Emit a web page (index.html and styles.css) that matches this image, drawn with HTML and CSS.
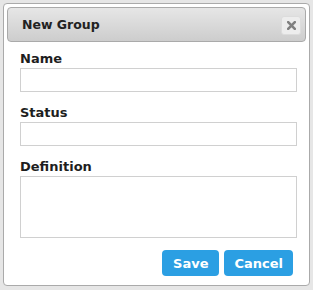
FILE: index.html
```html
<!DOCTYPE html>
<html>
<head>
<meta charset="utf-8">
<link rel="stylesheet" href="styles.css">
</head>
<body>
<div class="dialog">
  <div class="titlebar">
    <span class="title">New Group</span>
    <button class="close" type="button" aria-label="Close">
      <svg width="9" height="9" viewBox="0 0 9 9"><path d="M1.2 1.2L7.8 7.8M7.8 1.2L1.2 7.8" stroke="#808080" stroke-width="2.6" stroke-linecap="square"/></svg>
    </button>
  </div>
  <div class="content">
    <label class="label">Name</label>
    <input class="field" type="text">
    <label class="label">Status</label>
    <input class="field" type="text">
    <label class="label">Definition</label>
    <textarea class="field area"></textarea>
    <div class="actions">
      <button class="btn save" type="button">Save</button>
      <button class="btn" type="button">Cancel</button>
    </div>
  </div>
</div>
</body>
</html>
```
FILE: styles.css
```css
html, body {
  margin: 0;
  padding: 0;
}
body {
  background: #e6e6e6;
  width: 313px;
  height: 290px;
  overflow: hidden;
  font-family: "DejaVu Sans", Verdana, sans-serif;
  padding-top: 3px;
  box-sizing: border-box;
}
.dialog {
  margin-left: 3px;
  width: 307px;
  height: 283px;
  box-sizing: border-box;
  border: 1px solid #aaaaaa;
  border-radius: 4px;
  background: #ffffff;
  padding: 3px;
}
.titlebar {
  height: 35px;
  box-sizing: border-box;
  border: 1px solid #aaaaaa;
  border-radius: 4px;
  background: linear-gradient(#e6e6e6, #cdcdcd);
  display: flex;
  align-items: center;
  justify-content: space-between;
  padding: 0 4px 0 14px;
}
.title {
  font-size: 12.5px;
  font-weight: bold;
  color: #222222;
}
.close {
  width: 20px;
  height: 19px;
  margin-top: 1px;
  box-sizing: border-box;
  border: 1px solid #dcdcdc;
  border-radius: 3px;
  background: #ededed;
  padding: 0;
  display: flex;
  align-items: center;
  justify-content: center;
}
.content {
  padding: 9px 0 0 13px;
  display: flex;
  flex-direction: column;
  align-items: flex-start;
}
.label {
  font-size: 13px;
  font-weight: bold;
  line-height: 16px;
  color: #1e1e1e;
  margin-bottom: 1px;
}
.field {
  display: block;
  width: 277px;
  height: 24px;
  box-sizing: border-box;
  border: 1px solid #d0d0d0;
  margin: 0 0 13px 0;
  padding: 2px 4px;
  background: #ffffff;
  font-family: "DejaVu Sans", sans-serif;
  font-size: 12px;
}
.area {
  height: 62px;
  resize: none;
  margin-bottom: 12px;
}
.actions {
  width: 273px;
  display: flex;
  justify-content: flex-end;
  gap: 5px;
}
.btn {
  height: 26px;
  box-sizing: border-box;
  border: none;
  border-radius: 4px;
  background: #2b9fe3;
  color: #ffffff;
  font-family: "DejaVu Sans", sans-serif;
  font-size: 13px;
  font-weight: bold;
  padding: 0 10px;
}
.save {
  padding: 0 11px;
}
```
